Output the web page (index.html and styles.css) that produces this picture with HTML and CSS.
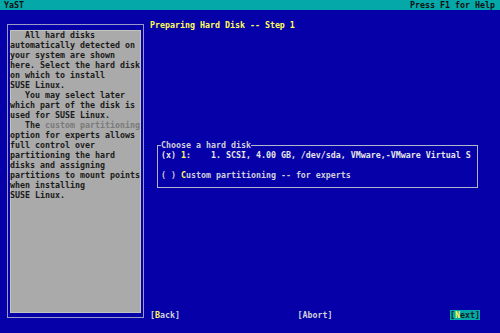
FILE: index.html
```html
<!DOCTYPE html>
<html lang="en">

<head>
    <meta charset="UTF-8">
    <title>YaST</title>
    <link rel="stylesheet" href="styles.css">
</head>

<body>
    <div class="topbar">
        <span>YaST</span>
        <span>Press F1 for Help</span>
    </div>
    <div class="main">
        <div class="help">
            <div class="help-text">   All hard disks
automatically detected on
your system are shown
here. Select the hard disk
on which to install
SUSE Linux.
   You may select later
which part of the disk is
used for SUSE Linux.
   The <span class="link">custom partitioning</span>
option for experts allows
full control over
partitioning the hard
disks and assigning
partitions to mount points
when installing
SUSE Linux.</div>
        </div>
        <div class="content">
            <h1 class="title">Preparing Hard Disk -- Step 1</h1>
            <fieldset class="frame">
                <legend>Choose a hard disk</legend>
                <div class="item current">(x) <span class="key">1</span>:    1. SCSI, 4.00 GB, /dev/sda, VMware,-VMware Virtual S</div>
                <div class="item">( ) <span class="key">C</span>ustom partitioning -- for experts</div>
            </fieldset>
            <div class="buttons">
                <span class="btn">[<span class="key">B</span>ack]</span>
                <span class="btn">[Abort]</span>
                <span class="btn focus">[<span class="key">N</span>ext]</span>
            </div>
        </div>
    </div>
</body>

</html>
```

FILE: styles.css
```css
* {
    margin: 0;
    padding: 0;
    box-sizing: border-box;
}

body {
    width: 500px;
    height: 333px;
    display: flex;
    flex-direction: column;
    background-color: #0500a8;
    color: #cfcfd8;
    font-family: "DejaVu Sans Mono", "Liberation Mono", monospace;
    font-size: 8.3px;
    font-weight: bold;
    line-height: 10px;
    overflow: hidden;
}

.topbar {
    display: flex;
    justify-content: space-between;
    height: 10px;
    padding: 0 5px 0 4px;
    background-color: #05a8a8;
    color: #101010;
}

.main {
    display: flex;
    flex: 1;
    padding: 10px 5px 13px 7px;
}

.help {
    width: 137px;
    height: 294px;
    margin-top: 4px;
    padding: 5px 2px 4px;
    border: 1px solid #9a9ac8;
}

.help-text {
    height: 100%;
    background-color: #aaaaaa;
    box-shadow: inset 0 0 0 1px #c2c2c2;
    color: #1a1a1a;
    white-space: pre;
}

.link {
    color: #7a7a7a;
}

.content {
    display: flex;
    flex-direction: column;
    flex: 1;
    margin-left: 6px;
}

.title {
    font-size: 8.3px;
    line-height: 10px;
    color: #ffff55;
}

.frame {
    width: 321px;
    margin: 110px 0 0 7px;
    padding: 0 3px 7px;
    border: 1px solid #b4b4cc;
}

.frame legend {
    padding: 0;
    line-height: 10px;
}

.item {
    white-space: pre;
}

.item + .item {
    margin-top: 10px;
}

.current {
    color: #e6e6e6;
}

.key {
    color: #ffff55;
}

.buttons {
    display: flex;
    justify-content: space-between;
    margin-top: auto;
    margin-right: 15px;
}

.btn {
    white-space: pre;
}

.focus {
    background-color: #05a8a8;
    color: #102020;
}
```
